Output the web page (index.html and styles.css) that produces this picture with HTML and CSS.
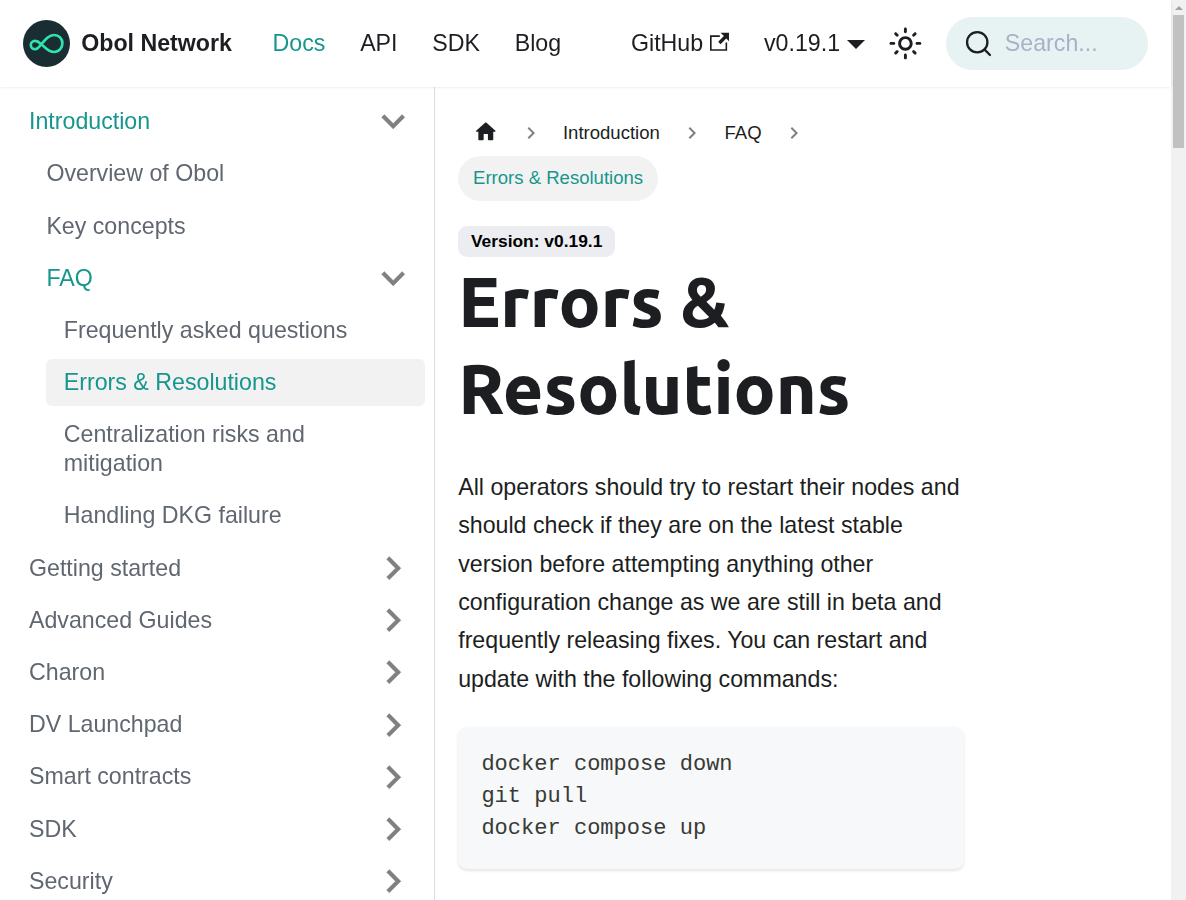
FILE: index.html
```html
<!DOCTYPE html>
<html lang="en">
<head>
<meta charset="utf-8">
<title>Errors &amp; Resolutions | Obol Network</title>
<link rel="stylesheet" href="styles.css">
</head>
<body>
<svg class="defs" width="0" height="0" aria-hidden="true">
  <symbol id="chevron" viewBox="0 0 24 24"><path d="M7.41 15.41L12 10.83l4.59 4.58L18 14l-6-6-6 6z"/></symbol>
</svg>
<div class="app">
  <div class="page">
    <nav class="navbar">
      <a class="brand">
        <svg class="logo" viewBox="0 0 47 47"><circle cx="23.5" cy="23.5" r="23.5" fill="#1a2d32"/><path d="M18 24.6C22 20 25.5 15 31 15c5 0 8.4 3.6 8.400 8.200C39.400 28 36 32 31 32c-6 0-9-5-13-8-2-1.900-3.500-3.100-6-3.100-2.500 0-4.200 1.900-4.200 4.100s1.800 4.200 4.500 4.200C15 29.200 16 27 18 24.600z" fill="none" stroke="#2fe4ab" stroke-width="2.7"/></svg>
        <b class="brand-name">Obol Network</b>
      </a>
      <a class="nav-link nav-link-active">Docs</a>
      <a class="nav-link">API</a>
      <a class="nav-link">SDK</a>
      <a class="nav-link">Blog</a>
      <div class="nav-right">
        <a class="nav-link">GitHub<svg class="external" viewBox="0 0 24 24"><path fill="currentColor" d="M21 13v10h-21v-19h12v2h-10v15h17v-8h2zm3-12h-10.988l4.035 4-6.977 7.070 2.828 2.828 6.977-7.070 4.125 4.172v-11z"/></svg></a>
        <a class="nav-link">v0.19.1<i class="caret"></i></a>
        <button class="theme-toggle" aria-label="Switch theme"><svg viewBox="0 0 24 24"><path fill="currentColor" d="M12,9c1.65,0,3,1.35,3,3s-1.35,3-3,3s-3-1.35-3-3S10.350,9,12,9 M12,7c-2.760,0-5,2.240-5,5s2.240,5,5,5s5-2.240,5-5 S14.760,7,12,7L12,7z M2,13l2,0c0.550,0,1-0.450,1-1s-0.450-1-1-1l-2,0c-0.550,0-1,0.450-1,1S1.450,13,2,13z M20,13l2,0c0.550,0,1-0.450,1-1 s-0.450-1-1-1l-2,0c-0.550,0-1,0.450-1,1S19.450,13,20,13z M11,2v2c0,0.550,0.450,1,1,1s1-0.450,1-1V2c0-0.550-0.450-1-1-1S11,1.450,11,2z M11,20v2c0,0.550,0.450,1,1,1s1-0.450,1-1v-2c0-0.550-0.450-1-1-1C11.450,19,11,19.450,11,20z M5.990,4.580c-0.390-0.390-1.030-0.390-1.410,0 c-0.390,0.390-0.390,1.030,0,1.410l1.060,1.060c0.390,0.390,1.030,0.390,1.410,0s0.390-1.030,0-1.410L5.990,4.580z M18.360,16.950 c-0.390-0.390-1.030-0.390-1.410,0c-0.390,0.390-0.390,1.030,0,1.410l1.060,1.060c0.390,0.390,1.030,0.390,1.410,0c0.390-0.390,0.390-1.030,0-1.410 L18.360,16.950z M19.420,5.990c0.390-0.390,0.390-1.030,0-1.410c-0.390-0.390-1.030-0.390-1.410,0l-1.060,1.060c-0.390,0.390-0.390,1.030,0,1.410 s1.030,0.390,1.410,0L19.420,5.990z M7.050,18.360c0.390-0.390,0.390-1.030,0-1.410c-0.390-0.390-1.030-0.390-1.410,0l-1.060,1.060 c-0.390,0.390-0.390,1.030,0,1.410s1.030,0.390,1.410,0L7.050,18.360z"/></svg></button>
        <div class="search"><svg class="search-icon" viewBox="0 0 20 20"><path d="M14.386 14.386l4.088 4.088-4.088-4.088c-2.942 2.942-7.711 2.942-10.653 0-2.942-2.942-2.942-7.711 0-10.653 2.942-2.942 7.711-2.942 10.653 0 2.942 2.942 2.942 7.711 0 10.653z" stroke="currentColor" stroke-width="1.7" fill="none" stroke-linecap="round" stroke-linejoin="round"/></svg><span class="search-text">Search...</span></div>
      </div>
    </nav>
    <div class="body">
      <aside class="sidebar">
        <div class="menu">
          <a class="item on">Introduction<svg class="arrow down"><use href="#chevron"/></svg></a>
          <a class="item sub">Overview of Obol</a>
          <a class="item sub">Key concepts</a>
          <a class="item sub on">FAQ<svg class="arrow down"><use href="#chevron"/></svg></a>
          <a class="item leaf">Frequently asked questions</a>
          <a class="item leaf on current">Errors &amp; Resolutions</a>
          <a class="item leaf">Centralization risks and mitigation</a>
          <a class="item leaf">Handling DKG failure</a>
          <a class="item">Getting started<svg class="arrow"><use href="#chevron"/></svg></a>
          <a class="item">Advanced Guides<svg class="arrow"><use href="#chevron"/></svg></a>
          <a class="item">Charon<svg class="arrow"><use href="#chevron"/></svg></a>
          <a class="item">DV Launchpad<svg class="arrow"><use href="#chevron"/></svg></a>
          <a class="item">Smart contracts<svg class="arrow"><use href="#chevron"/></svg></a>
          <a class="item">SDK<svg class="arrow"><use href="#chevron"/></svg></a>
          <a class="item">Security<svg class="arrow"><use href="#chevron"/></svg></a>
        </div>
      </aside>
      <main class="content">
        <div class="crumbs">
          <a class="crumb"><svg class="home" viewBox="0 0 24 24"><path fill="currentColor" d="M10 19v-5h4v5c0 .55.45 1 1 1h3c.55 0 1-.45 1-1v-7h1.700c.46 0 .68-.57.33-.87L12.670 3.600c-.38-.34-.96-.34-1.340 0l-8.360 7.530c-.34.3-.13.87.33.87H5v7c0 .55.45 1 1 1h3c.55 0 1-.45 1-1z"/></svg></a>
          <svg class="sep"><use href="#chevron"/></svg>
          <a class="crumb">Introduction</a>
          <svg class="sep"><use href="#chevron"/></svg>
          <a class="crumb">FAQ</a>
          <svg class="sep"><use href="#chevron"/></svg>
          <span class="crumb crumb-current">Errors &amp; Resolutions</span>
        </div>
        <span class="badge">Version: v0.19.1</span>
        <h1 class="title"><span class="title-top">Errors &amp;</span> <span class="title-bottom">Resolutions</span></h1>
        <p class="lead">All operators should try to restart their nodes and should check if they are on the latest stable version before attempting anything other configuration change as we are still in beta and frequently releasing fixes. You can restart and update with the following commands:</p>
        <pre class="code">docker compose down
git pull
docker compose up</pre>
      </main>
    </div>
  </div>
  <div class="scrollbar"><i class="scroll-up"></i><i class="thumb"></i></div>
</div>
</body>
</html>
```
FILE: styles.css
```css
*, *::before, *::after { box-sizing: border-box; }
body {
  margin: 0;
  height: 900px;
  overflow: hidden;
  background: #fff;
  color: #1c1e21;
  font: 23.2px/1.65 "Liberation Sans", Arial, sans-serif;
}
svg { display: block; flex: none; }
.defs { position: absolute; }
.app { display: flex; height: 900px; }
.page { width: 1171px; display: flex; flex-direction: column; }

.navbar {
  display: flex;
  align-items: center;
  flex: none;
  height: 87px;
  padding: 0 23.2px;
  background: #fff;
  box-shadow: 0 1.45px 2.9px rgba(0, 0, 0, .1);
  z-index: 1;
  will-change: transform;
}
.brand { display: flex; align-items: center; margin-right: 23.2px; }
.logo { width: 47px; height: 47px; margin-right: 11px; }
.nav-link { display: flex; align-items: center; padding: 0 17.4px; white-space: nowrap; }
.nav-link-active { color: #16968c; }
.nav-right { display: flex; align-items: center; margin-left: auto; }
.external { width: 19.6px; height: 19.6px; margin: 0 0 3px 6.5px; }
.caret {
  margin: 2px 0 0 7px;
  border: 9.3px solid transparent;
  border-top-color: currentColor;
  border-bottom: 0;
}
.theme-toggle {
  display: grid;
  place-items: center;
  width: 46.4px;
  height: 46.4px;
  padding: 0;
  border: 0;
  background: none;
  color: #1c1e21;
}
.theme-toggle svg { width: 34.8px; height: 34.8px; }
.search {
  display: flex;
  align-items: center;
  width: 201.6px;
  height: 53px;
  margin-left: 17.4px;
  padding-left: 19px;
  border-radius: 27px;
  background: #e7f3f3;
}
.search-icon { width: 27px; height: 27px; }
.search-text { margin-left: 12.6px; color: #a9b0c7; }

.body { display: flex; flex: 1; min-height: 0; }
.sidebar {
  width: 435px;
  flex: none;
  overflow: hidden;
  border-right: 1px solid #dadde1;
  background: #fff;
  will-change: transform;
}
.menu { display: flex; flex-direction: column; gap: 5.8px; padding: 11.47px 9px 0 11.6px; }
.item {
  display: flex;
  align-items: center;
  justify-content: space-between;
  flex: none;
  min-height: 46.4px;
  padding: 8.7px 17.4px;
  border-radius: 5.8px;
  color: #606770;
  line-height: 29px;
}
.sub { margin-left: 17.4px; }
.leaf { margin-left: 34.8px; }
.on { color: #16968c; }
.current { background: #f2f2f2; }
.arrow {
  width: 46.4px;
  height: 46.4px;
  margin: -8.7px -9px -8.7px 0;
  fill: #808080;
  stroke: #808080;
  stroke-width: .2;
  transform: rotate(90deg);
}
.arrow.down { transform: rotate(180deg); }

.content { width: 506.2px; margin-left: 23.2px; padding-top: 23.2px; }
.crumbs { display: flex; flex-wrap: wrap; align-items: center; margin-bottom: 18.6px; font-size: 18.56px; }
.crumb { display: flex; align-items: center; height: 45.5px; padding: 0 14.85px; border-radius: 23px; }
.crumb-current { background: #f2f2f2; color: #16968c; }
.home { width: 25.6px; height: 25.6px; margin: -2px -.2px 0 -.2px; }
.sep { width: 24px; height: 24px; margin: 0 5.4px 0 5.6px; fill: #808080; transform: rotate(90deg); }
.badge {
  display: block;
  width: fit-content;
  margin-top: 25px;
  height: 31px;
  padding: 0 12.7px;
  border-radius: 9.3px;
  background: #ebedf0;
  color: #000;
  font-size: 17.4px;
  font-weight: 700;
  line-height: 31px;
}
.title { margin: 1px 0 36px; font: 800 69.6px/87px Ubuntu, "Noto Sans", sans-serif; }
.title-top, .title-bottom { display: block; white-space: nowrap; }
.lead { margin: 0 0 29px; line-height: 38.28px; }
.code {
  margin: 0;
  padding: 22.6px 23.2px 23.8px;
  border-radius: 9.3px;
  background: #f6f8fa;
  box-shadow: 0 1.45px 2.9px rgba(0, 0, 0, .1);
  color: #393a34;
  font: 22.04px/31.96px "Liberation Mono", monospace;
}

.scrollbar { display: flex; flex-direction: column; align-items: center; width: 15px; background: #f1f1f1; }
.scroll-up { margin: 6px 0 5px; border: 4px solid transparent; border-top: 0; border-bottom-color: #a3a3a3; }
.thumb { width: 11px; height: 133px; background: #c1c1c1; }
```
